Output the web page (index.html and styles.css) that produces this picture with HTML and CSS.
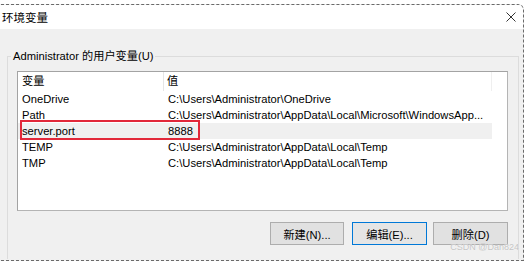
FILE: index.html
```html
<!DOCTYPE html>
<html lang="zh">
<head>
<meta charset="utf-8">
<title>环境变量</title>
<link rel="stylesheet" href="styles.css">
</head>
<body>
<div class="window">
  <div class="titlebar">
    <span class="title">环境变量</span>
    <svg class="close" width="10" height="10" viewBox="0 0 10 10"><path d="M0.5 0.5 L9.5 9.5 M9.5 0.5 L0.5 9.5" stroke="#333" stroke-width="1" fill="none"/></svg>
  </div>
  <div class="content">
    <fieldset class="group">
      <legend class="legend">Administrator 的用户变量(U)</legend>
      <div class="list">
        <div class="row head">
          <div class="c1">变量</div>
          <div class="c2">值</div>
        </div>
        <div class="row"><div class="c1">OneDrive</div><div class="c2">C:\Users\Administrator\OneDrive</div></div>
        <div class="row"><div class="c1">Path</div><div class="c2">C:\Users\Administrator\AppData\Local\Microsoft\WindowsApp...</div></div>
        <div class="row sel"><div class="c1">server.port</div><div class="c2">8888</div></div>
        <div class="row"><div class="c1">TEMP</div><div class="c2">C:\Users\Administrator\AppData\Local\Temp</div></div>
        <div class="row"><div class="c1">TMP</div><div class="c2">C:\Users\Administrator\AppData\Local\Temp</div></div>
        <div class="mark"></div>
      </div>
      <div class="buttons">
        <button class="btn b-new">新建(N)...</button>
        <button class="btn b-edit focus">编辑(E)...</button>
        <button class="btn b-del">删除(D)</button>
      </div>
    </fieldset>
  </div>
  <div class="watermark">CSDN @Dan824</div>
</div>
</body>
</html>
```

FILE: styles.css
```css
* { box-sizing: border-box; }
html, body { margin: 0; padding: 0; }
body {
  width: 526px;
  height: 262px;
  padding-top: 4px;
  overflow: hidden;
  background: #ffffff;
  font-family: "Liberation Sans", "Noto Sans CJK SC", sans-serif;
  font-size: 11.2px;
  color: #000;
}
.window {
  position: relative;
  margin-left: -4px;
  width: 528px;
  height: 257px;
  border-top: 1px dashed #6a6a6a;
  border-right: 1px dashed #6a6a6a;
  border-bottom: 1px dashed #6a6a6a;
  border-top-right-radius: 6px;
  background: #f0f0f0;
  display: flex;
  flex-direction: column;
  overflow: hidden;
}
.titlebar {
  flex: none;
  height: 24px;
  background: #ffffff;
  display: flex;
  align-items: center;
  justify-content: space-between;
  padding: 0 7px 0 6px;
}
.title {
  font-family: "Noto Sans CJK SC", sans-serif;
  font-size: 11.5px;
  line-height: 16px;
}
.close { display: block; }
.content {
  flex: 1;
  padding: 0 0 0 11px;
  overflow: hidden;
}
.group {
  margin: 19px 0 0 0;
  padding: 0;
  width: 512px;
  height: 211px;
  border: 1px solid #dcdcdc;
  border-bottom: none;
}
.legend {
  margin-left: 3px;
  padding: 0 2px;
  line-height: 16px;
  font-size: 11.2px;
  color: #000;
}
.list {
  position: relative;
  margin: 7px 10px 0 9px;
  height: 140px;
  border: 1px solid #a3a3a3;
  border-right-color: #b4b4b4;
  border-bottom-color: #b4b4b4;
  background: #ffffff;
}
.row {
  display: flex;
  width: 474px;
  height: 16px;
  line-height: 16px;
  white-space: nowrap;
}
.row.head {
  height: 19px;
  line-height: 19px;
  border-right: 1px solid #efefef;
}
.row.head .c1 { border-right: 1px solid #e5e5e5; }
.c1 { width: 146px; padding-left: 4px; overflow: hidden; }
.c2 { flex: 1; padding-left: 4px; overflow: hidden; }
.row.head .c2 { padding-left: 3px; }
.row.sel { background: #f0f0f0; }
.mark {
  position: absolute;
  left: 2px;
  top: 48px;
  width: 180px;
  height: 20px;
  border: 2px solid #e2283a;
}
.buttons {
  display: flex;
  margin: 11px 10px 0 0;
  justify-content: flex-end;
}
.btn {
  height: 23px;
  width: 75px;
  padding: 0;
  font-family: "Liberation Sans", "Noto Sans CJK SC", sans-serif;
  font-size: 11.2px;
  color: #000;
  background: #e1e1e1;
  border: 1px solid #adadad;
  border-radius: 0;
}
.b-new { width: 74px; margin-right: 8px; }
.b-edit { margin-right: 6px; }
.btn.focus { border-color: #0078d7; background: #e5e5e5; }
.watermark {
  position: absolute;
  right: 4px;
  bottom: 7px;
  font-family: "Liberation Sans", sans-serif;
  font-size: 9px;
  line-height: 11px;
  color: #c4c4c4;
  text-shadow: 0 0 1px #ffffff;
}
```
